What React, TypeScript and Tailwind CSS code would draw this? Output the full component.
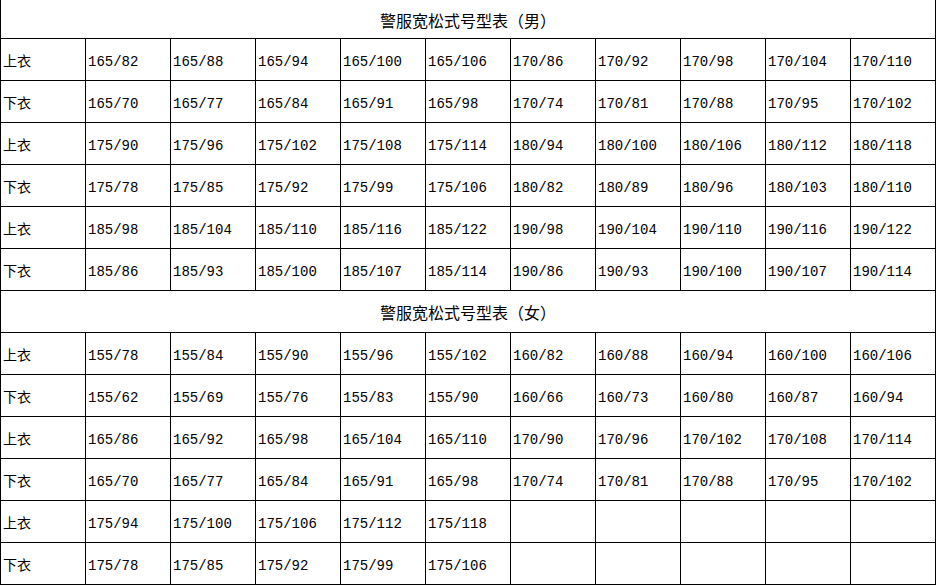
import React from "react";

const men: [string, string[]][] = [
  ["上衣", ["165/82", "165/88", "165/94", "165/100", "165/106", "170/86", "170/92", "170/98", "170/104", "170/110"]],
  ["下衣", ["165/70", "165/77", "165/84", "165/91", "165/98", "170/74", "170/81", "170/88", "170/95", "170/102"]],
  ["上衣", ["175/90", "175/96", "175/102", "175/108", "175/114", "180/94", "180/100", "180/106", "180/112", "180/118"]],
  ["下衣", ["175/78", "175/85", "175/92", "175/99", "175/106", "180/82", "180/89", "180/96", "180/103", "180/110"]],
  ["上衣", ["185/98", "185/104", "185/110", "185/116", "185/122", "190/98", "190/104", "190/110", "190/116", "190/122"]],
  ["下衣", ["185/86", "185/93", "185/100", "185/107", "185/114", "190/86", "190/93", "190/100", "190/107", "190/114"]],
];

const women: [string, string[]][] = [
  ["上衣", ["155/78", "155/84", "155/90", "155/96", "155/102", "160/82", "160/88", "160/94", "160/100", "160/106"]],
  ["下衣", ["155/62", "155/69", "155/76", "155/83", "155/90", "160/66", "160/73", "160/80", "160/87", "160/94"]],
  ["上衣", ["165/86", "165/92", "165/98", "165/104", "165/110", "170/90", "170/96", "170/102", "170/108", "170/114"]],
  ["下衣", ["165/70", "165/77", "165/84", "165/91", "165/98", "170/74", "170/81", "170/88", "170/95", "170/102"]],
  ["上衣", ["175/94", "175/100", "175/106", "175/112", "175/118", "", "", "", "", ""]],
  ["下衣", ["175/78", "175/85", "175/92", "175/99", "175/106", "", "", "", "", ""]],
];

function Cell({ text }: { text: string }) {
  return (
    <div className="h-[42px] border-r border-b border-black flex items-center pl-[2px] pt-[5px] text-[14px] text-black whitespace-nowrap">
      {text}
    </div>
  );
}

function Title({ text, first }: { text: string; first?: boolean }) {
  return (
    <div
      className={`col-span-11 border-r border-b border-black flex items-center justify-center pt-[1px] text-[16px] text-black ${first ? "h-[39px]" : "h-[42px]"}`}
      style={{ fontFamily: '"Noto Sans CJK SC", sans-serif' }}
    >
      {text}
    </div>
  );
}

export default function App() {
  return (
    <div className="w-[937px] h-[586px] bg-white">
      <div
        className="grid grid-cols-[repeat(11,85px)] w-[936px] border-l border-black"
        style={{ fontFamily: '"Liberation Mono", "Noto Sans CJK SC", monospace' }}
      >
        <Title text="警服宽松式号型表（男）" first />
        {men.map(([label, vals], i) => (
          <React.Fragment key={"m" + i}>
            <Cell text={label} />
            {vals.map((v, j) => (
              <Cell key={j} text={v} />
            ))}
          </React.Fragment>
        ))}
        <Title text="警服宽松式号型表（女）" />
        {women.map(([label, vals], i) => (
          <React.Fragment key={"w" + i}>
            <Cell text={label} />
            {vals.map((v, j) => (
              <Cell key={j} text={v} />
            ))}
          </React.Fragment>
        ))}
      </div>
    </div>
  );
}
